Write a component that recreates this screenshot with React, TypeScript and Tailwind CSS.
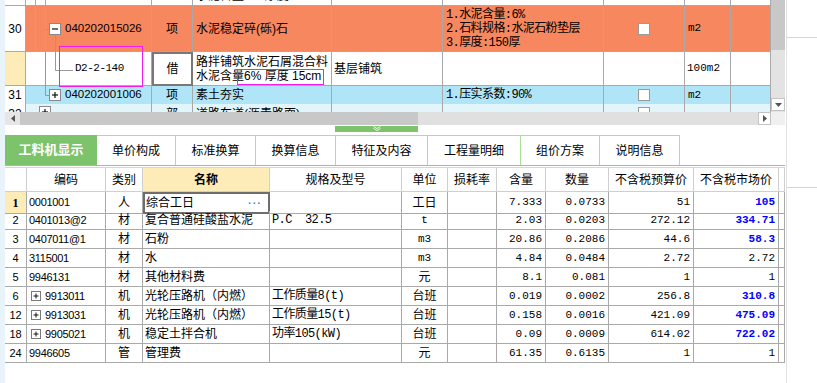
import React from "react";

const F = "font-['Liberation_Sans','Noto_Sans_CJK_SC',sans-serif]";
const M = "font-['Liberation_Mono','Noto_Sans_CJK_SC',monospace]";
const TB = "border-r border-b border-[#a9a9a9]";
const TOPCOLS = "grid grid-cols-[21px_126px_41px_139px_111px_161px_81px_46px_40px]";
const BCOLS = "grid grid-cols-[22px_79px_37px_127px_132px_46px_49px_49px_63px_85px_85px_6px]";
const ORANGE = "bg-[#f7875e]";
const BLUE = "bg-[#afe5f7]";

function Check() {
  return <div className="w-[12px] h-[12px] bg-white border border-[#9a9a9a]" />;
}

function TreeBox({ x, y, plus }: { x: number; y: number; plus?: boolean }) {
  return (
    <g>
      <rect x={x + 0.5} y={y + 0.5} width={11} height={11} fill="#fff" stroke="#8a8a8a" />
      <line x1={x + 3} y1={y + 6} x2={x + 9} y2={y + 6} stroke="#111" strokeWidth={1.2} />
      {plus && <line x1={x + 6} y1={y + 3} x2={x + 6} y2={y + 9} stroke="#111" strokeWidth={1.2} />}
    </g>
  );
}

function SmallPlus() {
  return (
    <svg width="10" height="10" className="shrink-0">
      <rect x="0.5" y="0.5" width="9" height="9" fill="#fff" stroke="#7a7a7a" />
      <line x1="2.5" y1="5" x2="7.5" y2="5" stroke="#111" />
      <line x1="5" y1="2.5" x2="5" y2="7.5" stroke="#111" />
    </svg>
  );
}

const rows = [
  { n: "1", code: "0001001", t: "人", name: "综合工日", spec: "", unit: "工日", q: "7.333", a: "0.0733", b: "51", m: "105", blue: true },
  { n: "2", code: "0401013@2", t: "材", name: "复合普通硅酸盐水泥", spec: "P.C  32.5", unit: "t", q: "2.03", a: "0.0203", b: "272.12", m: "334.71", blue: true },
  { n: "3", code: "0407011@1", t: "材", name: "石粉", spec: "", unit: "m3", q: "20.86", a: "0.2086", b: "44.6", m: "58.3", blue: true },
  { n: "4", code: "3115001", t: "材", name: "水", spec: "", unit: "m3", q: "4.84", a: "0.0484", b: "2.72", m: "2.72", blue: false },
  { n: "5", code: "9946131", t: "材", name: "其他材料费", spec: "", unit: "元", q: "8.1", a: "0.081", b: "1", m: "1", blue: false },
  { n: "6", code: "9913011", plus: true, t: "机", name: "光轮压路机（内燃）", spec: "工作质量8(t)", unit: "台班", q: "0.019", a: "0.0002", b: "256.8", m: "310.8", blue: true },
  { n: "12", code: "9913031", plus: true, t: "机", name: "光轮压路机（内燃）", spec: "工作质量15(t)", unit: "台班", q: "0.158", a: "0.0016", b: "421.09", m: "475.09", blue: true },
  { n: "18", code: "9905021", plus: true, t: "机", name: "稳定土拌合机", spec: "功率105(kW)", unit: "台班", q: "0.09", a: "0.0009", b: "614.02", m: "722.02", blue: true },
  { n: "24", code: "9946605", t: "管", name: "管理费", spec: "", unit: "元", q: "61.35", a: "0.6135", b: "1", m: "1", blue: false },
];

const tabs = [
  { label: "工料机显示", w: "w-[92px]", active: true },
  { label: "单价构成", w: "w-[79px]" },
  { label: "标准换算", w: "w-[80px]" },
  { label: "换算信息", w: "w-[80px]" },
  { label: "特征及内容", w: "w-[92px]" },
  { label: "工程量明细", w: "w-[93px]" },
  { label: "组价方案", w: "w-[79px]" },
  { label: "说明信息", w: "w-[80px]" },
];

const BC = "border-r border-b border-[#a9a9a9] flex items-center overflow-hidden whitespace-nowrap";
const HC = "border-r border-b border-[#cfcfcf] flex items-center justify-center whitespace-nowrap text-[12px]";

export default function App() {
  return (
    <div className={`w-[817px] h-[383px] bg-white flex overflow-hidden text-black ${F}`}>
      <div className="w-[5px] shrink-0 bg-[#e9f4fa]" />
      <div className="w-[780px] shrink-0 flex flex-col">
        {/* top grid */}
        <div className="flex h-[112px]">
          <div className="w-[766px] relative overflow-hidden">
            {/* partial top row */}
            <div className={`${TOPCOLS} h-[19px] -mt-[13px]`}>
              <div className={`${TB} bg-white`} />
              <div className={`${TB} bg-white relative`}>
                <svg width="126" height="19" className="absolute left-0 top-0">
                  <line x1="9.5" y1="0" x2="9.5" y2="19" stroke="#a9a9a9" />
                  <line x1="19.5" y1="0" x2="19.5" y2="19" stroke="#a9a9a9" />
                </svg>
              </div>
              <div className={`${TB} bg-white`} />
              <div className={`${TB} bg-white flex items-center pl-[3px] text-[12px] whitespace-nowrap overflow-hidden`}>水泥含量6% 厚度 15cm</div>
              <div className={`${TB} bg-white`} />
              <div className={`${TB} bg-white`} />
              <div className={`${TB} bg-white`} />
              <div className={`${TB} bg-white`} />
              <div className={`${TB} bg-white`} />
            </div>
            {/* row 30 */}
            <div className={`${TOPCOLS} h-[46px]`}>
              <div className={`${TB} bg-white flex items-center justify-center text-[12px]`}>30</div>
              <div className={`${TB} ${ORANGE} relative flex items-center`}>
                <svg width="126" height="46" className="absolute left-0 top-0">
                  <line x1="9.5" y1="0" x2="9.5" y2="46" stroke="#a9a9a9" />
                  <line x1="19.5" y1="0" x2="19.5" y2="46" stroke="#a9a9a9" />
                  <line x1="19.5" y1="23.5" x2="24" y2="23.5" stroke="#9a9a9a" />
                  <line x1="29.5" y1="29" x2="29.5" y2="46" stroke="#9a9a9a" />
                  <TreeBox x={23} y={17} />
                </svg>
                <span className="relative pl-[39px] text-[11.5px]">040202015026</span>
              </div>
              <div className={`${TB} ${ORANGE} flex items-center justify-center text-[12px]`}>项</div>
              <div className={`${TB} ${ORANGE} flex items-center pl-[3px] text-[12px] whitespace-nowrap`}>水泥稳定碎(砾)石</div>
              <div className={`${TB} ${ORANGE}`} />
              <div className={`${TB} ${ORANGE} flex flex-col justify-center pl-[3px] text-[12px] leading-[14px] whitespace-nowrap overflow-hidden ${M} tracking-[-0.6px]`}>
                <div>1.水泥含量:6%</div>
                <div>2.石料规格:水泥石粉垫层</div>
                <div>3.厚度:150厚</div>
              </div>
              <div className={`${TB} ${ORANGE} flex items-center justify-center`}><Check /></div>
              <div className={`${TB} ${ORANGE} flex items-center pl-[3px] text-[11px] ${M}`}>m2</div>
              <div className={`${TB} ${ORANGE}`} />
            </div>
            {/* row D2 */}
            <div className={`${TOPCOLS} h-[34px]`}>
              <div className={`${TB} bg-[#feecb8]`} />
              <div className={`${TB} bg-white relative flex items-center`}>
                <svg width="126" height="34" className="absolute left-0 top-0">
                  <line x1="19.5" y1="0" x2="19.5" y2="34" stroke="#9a9a9a" />
                  <line x1="29.5" y1="0" x2="29.5" y2="18.5" stroke="#9a9a9a" />
                  <line x1="29.5" y1="18.5" x2="47" y2="18.5" stroke="#9a9a9a" />
                </svg>
                <span className={`relative pl-[49px] text-[11px] ${M} tracking-[-0.5px]`}>D2-2-140</span>
              </div>
              <div className="border-2 border-[#787878] bg-white flex items-center justify-center text-[12px]">借</div>
              <div className={`${TB} bg-white flex flex-col justify-center pl-[3px] text-[12px] leading-[14px] whitespace-nowrap overflow-hidden`}>
                <div>路拌铺筑水泥石屑混合料</div>
                <div>水泥含量6% 厚度 15cm</div>
              </div>
              <div className={`${TB} bg-white flex items-center pl-[2px] text-[12px]`}>基层铺筑</div>
              <div className={`${TB} bg-white`} />
              <div className={`${TB} bg-white`} />
              <div className={`${TB} bg-white flex items-center pl-[2px] text-[11px] ${M}`}>100m2</div>
              <div className={`${TB} bg-white`} />
            </div>
            {/* row 31 */}
            <div className={`${TOPCOLS} h-[18px]`}>
              <div className={`${TB} bg-white flex items-center justify-center text-[12px]`}>31</div>
              <div className={`${TB} ${BLUE} relative flex items-center`}>
                <svg width="126" height="18" className="absolute left-0 top-0">
                  <line x1="19.5" y1="0" x2="19.5" y2="9.5" stroke="#9a9a9a" />
                  <line x1="19.5" y1="9.5" x2="24" y2="9.5" stroke="#9a9a9a" />
                  <TreeBox x={23} y={3} plus />
                </svg>
                <span className="relative pl-[39px] text-[11.5px]">040202001006</span>
              </div>
              <div className={`${TB} ${BLUE} flex items-center justify-center text-[12px]`}>项</div>
              <div className={`${TB} ${BLUE} flex items-center pl-[3px] text-[12px]`}>素土夯实</div>
              <div className={`${TB} ${BLUE}`} />
              <div className={`${TB} ${BLUE} flex items-center pl-[3px] text-[12px] whitespace-nowrap ${M} tracking-[-0.6px]`}>1.压实系数:90%</div>
              <div className={`${TB} ${BLUE} flex items-center justify-center`}><Check /></div>
              <div className={`${TB} ${BLUE} flex items-center pl-[3px] text-[11px] ${M}`}>m2</div>
              <div className={`${TB} ${BLUE}`} />
            </div>
            {/* partial bottom row */}
            <div className={`${TOPCOLS} h-[19px]`}>
              <div className={`${TB} bg-white flex items-start pt-[3px] justify-center text-[12px] leading-[14px]`}>32</div>
              <div className={`${TB} bg-[#e1f5fb] relative`}>
                <svg width="126" height="19" className="absolute left-0 top-0">
                  <TreeBox x={13} y={2} plus />
                </svg>
              </div>
              <div className={`${TB} bg-[#e1f5fb] flex items-start pt-[3px] justify-center text-[12px] leading-[14px]`}>部</div>
              <div className={`${TB} bg-[#e1f5fb] flex items-start pt-[3px] pl-[3px] text-[12px] leading-[14px] whitespace-nowrap overflow-hidden`}>道路车道(沥青路面)</div>
              <div className={`${TB} bg-[#e1f5fb]`} />
              <div className={`${TB} bg-[#e1f5fb]`} />
              <div className={`${TB} bg-[#e1f5fb] flex items-start pt-[3px] justify-center`}><Check /></div>
              <div className={`${TB} bg-[#e1f5fb]`} />
              <div className={`${TB} bg-[#e1f5fb]`} />
            </div>
            {/* editor overlays */}
            <div className="absolute left-[54px] top-[46px] w-[84px] h-[41px] border border-[#f01cf0]" />
            <div className="absolute left-[232px] top-[69px] w-[87px] h-[16px] border border-[#f01cf0]" />
          </div>
          {/* vertical scrollbar */}
          <div className="w-[14px] flex flex-col bg-[#e3e3e3]">
            <div className="h-[50px] bg-[#c8c8c8]" />
            <div className="flex-1" />
            <div className="h-[13px] mb-[1px] bg-white border border-[#c4c4c4] flex items-center justify-center">
              <svg width="7" height="4"><path d="M0 0H7L3.5 4Z" fill="#555" /></svg>
            </div>
          </div>
        </div>
        {/* horizontal scrollbar */}
        <div className="flex h-[13px]">
          <div className="w-[15px] bg-[#e6e6e6] flex items-center justify-center">
            <svg width="4" height="7"><path d="M4 0V7L0 3.5Z" fill="#555" /></svg>
          </div>
          <div className="w-[398px] bg-[#c8c8c8]" />
          <div className="flex-1 bg-[#e0e0e0]" />
          <div className="w-[13px] bg-white border border-[#c4c4c4] flex items-center justify-center">
            <svg width="4" height="7"><path d="M0 0V7L4 3.5Z" fill="#555" /></svg>
          </div>
          <div className="w-[14px] bg-[#f0f0f0]" />
        </div>
        {/* splitter */}
        <div className="h-[10px] pt-[1px]">
          <div className="ml-[330px] w-[83px] h-[6px] bg-[#7cc36b] flex justify-center">
            <svg width="8" height="5">
              <path d="M0.5 0.5L4 2.5L7.5 0.5M0.5 2.5L4 4.5L7.5 2.5" stroke="#e8f6e2" fill="none" />
            </svg>
          </div>
        </div>
        {/* tabs */}
        <div className="h-[31px] flex border-b border-[#8ccf78]">
          {tabs.map((t) => (
            <div
              key={t.label}
              className={`${t.w} h-[30px] flex items-center justify-center ${
                t.active
                  ? "bg-[#7cc36b] text-white font-bold text-[13px]"
                  : "border-t border-r border-[#a8e196] text-[12px]"
              }`}
            >
              {t.label}
            </div>
          ))}
        </div>
        <div className="h-[1px]" />
        {/* bottom table header */}
        <div className={`${BCOLS} h-[25px] border-t border-[#d6d6d6]`}>
          <div className={HC} />
          <div className={HC}>编码</div>
          <div className={HC}>类别</div>
          <div className={`${HC} bg-[#feecb8] font-bold`}>名称</div>
          <div className={HC}>规格及型号</div>
          <div className={HC}>单位</div>
          <div className={HC}>损耗率</div>
          <div className={HC}>含量</div>
          <div className={HC}>数量</div>
          <div className={HC}>不含税预算价</div>
          <div className={HC}>不含税市场价</div>
          <div className={HC} />
        </div>
        {rows.map((r, i) => (
          <div key={r.n} className={`${BCOLS} h-[19px]`}>
            <div
              className={`${BC} justify-center ${
                i === 0 ? "bg-[#feecb8] font-bold text-[12px] font-['Liberation_Serif',serif]" : "text-[11px]"
              }`}
            >
              {r.n}
            </div>
            <div className={`${BC} text-[11px] tracking-[-0.3px] ${r.plus ? "pl-[4px] gap-[4px]" : "pl-[2px]"}`}>
              {r.plus && <SmallPlus />}
              <span>{r.code}</span>
            </div>
            <div className={`${BC} justify-center text-[12px]`}>{r.t}</div>
            {i === 0 ? (
              <div className="border-2 border-[#6e6e6e] flex items-center justify-between pl-[1px] pr-[6px] text-[12px] whitespace-nowrap">
                <span>{r.name}</span>
                <span className="text-[#4a8fd8] font-bold text-[11px] tracking-[1px]">···</span>
              </div>
            ) : (
              <div className={`${BC} pl-[2px] text-[12px]`}>{r.name}</div>
            )}
            <div className={`${BC} pl-[2px] text-[12px] ${M} tracking-[-0.6px] whitespace-pre`}>{r.spec}</div>
            <div className={`${BC} justify-center ${r.unit === "t" || r.unit === "m3" ? `text-[11px] ${M}` : "text-[12px]"}`}>{r.unit}</div>
            <div className={BC} />
            <div className={`${BC} justify-end pr-[3px] text-[11px] ${M}`}>{r.q}</div>
            <div className={`${BC} justify-end pr-[3px] text-[11px] ${M}`}>{r.a}</div>
            <div className={`${BC} justify-end pr-[3px] text-[11px] ${M}`}>{r.b}</div>
            <div className={`${BC} justify-end pr-[3px] text-[11px] ${M} ${r.blue ? "text-[#0000ff] font-bold" : ""}`}>{r.m}</div>
            <div className={BC} />
          </div>
        ))}
      </div>
      <div className="flex-1 ml-[1px] border-l border-[#e2e2e2] flex flex-col">
        <div className="h-[38px] border-b border-[#d4d4d4]" />
        <div className="h-[150px] border-b border-[#d4d4d4]" />
      </div>
    </div>
  );
}
